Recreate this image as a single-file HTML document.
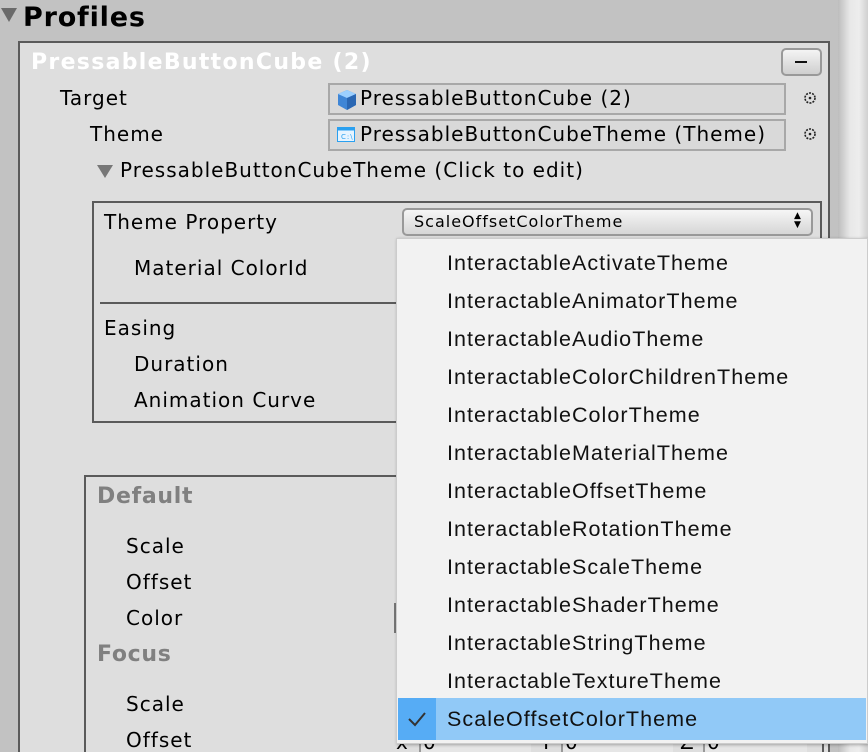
<!DOCTYPE html>
<html><head><style>
*{margin:0;padding:0;box-sizing:border-box}
html,body{width:868px;height:752px;overflow:hidden}
body{background:#c2c2c2;position:relative;font-family:"DejaVu Sans",sans-serif;font-size:20px;color:#000;letter-spacing:1px}
.a{position:absolute;white-space:nowrap}
.t{position:absolute;white-space:nowrap;line-height:24px}
.m{font-family:"Liberation Sans",sans-serif;font-size:21.5px;color:#111;position:absolute;left:447px;white-space:nowrap;line-height:24px;letter-spacing:1.05px}
</style></head><body>
<div class="a" style="left:838px;top:0;width:30px;height:752px;background:linear-gradient(90deg,#bdbdbd,#e8e8e8 40%,#ededed 70%,#d0d0d0)"></div>
<div class="a" style="left:1px;top:8px;width:0;height:0;border-left:8px solid transparent;border-right:8px solid transparent;border-top:14px solid #6a6a6a"></div>
<div class="t" style="left:23px;top:6px;font-weight:bold;font-size:27px;letter-spacing:0.8px">Profiles</div>
<div class="a" style="left:18px;top:41px;width:812px;height:711px;background:#dedede;border:2px solid #5a5a5a;border-bottom:none"></div>
<div class="t" style="left:31px;top:51px;font-weight:bold;color:#fff;font-size:22px;letter-spacing:1.3px">PressableButtonCube (2)</div>
<div class="a" style="left:781px;top:48px;width:41px;height:28px;border:2px solid #999;border-radius:5px;background:linear-gradient(#f4f4f4,#cfcfcf)"></div>
<div class="a" style="left:795px;top:61px;width:12px;height:2px;background:#111"></div>
<div class="t" style="left:60px;top:86px">Target</div>
<div class="t" style="left:90px;top:122px">Theme</div>
<div class="a" style="left:328px;top:83px;width:458px;height:32px;border:2px solid #a8a8a8;background:#d9d9d9"></div>
<div class="a" style="left:328px;top:119px;width:458px;height:32px;border:2px solid #a8a8a8;background:#d9d9d9"></div>
<svg class="a" style="left:336px;top:89px" width="22" height="22" viewBox="0 0 22 22"><path d="M11 1L20 5V16L11 21L2 16V5Z" fill="#3f86d6"/><path d="M11 1L20 5L11 9L2 5Z" fill="#9cd0ff"/><path d="M11 9L20 5V16L11 21Z" fill="#2a67b3"/></svg>
<svg class="a" style="left:337px;top:127px" width="18" height="16"><rect x="0.5" y="0.5" width="17" height="14" fill="#e6f4ff" stroke="#2aa0f0"/><rect x="0.5" y="0.5" width="17" height="3" fill="#2aa0f0"/><text x="4" y="12" font-size="7" fill="#2aa0f0" font-family="DejaVu Sans">C:\</text></svg>
<div class="t" style="left:360px;top:86px">PressableButtonCube (2)</div>
<div class="t" style="left:360px;top:122px">PressableButtonCubeTheme (Theme)</div>
<svg class="a" style="left:802px;top:90px" width="16" height="16"><circle cx="8" cy="8" r="5" fill="none" stroke="#222" stroke-width="1.6" stroke-dasharray="2 1.2"/><circle cx="8" cy="8" r="1.3" fill="#222"/></svg>
<svg class="a" style="left:802px;top:126px" width="16" height="16"><circle cx="8" cy="8" r="5" fill="none" stroke="#222" stroke-width="1.6" stroke-dasharray="2 1.2"/><circle cx="8" cy="8" r="1.3" fill="#222"/></svg>
<div class="a" style="left:97px;top:165px;width:0;height:0;border-left:8px solid transparent;border-right:8px solid transparent;border-top:13px solid #777"></div>
<div class="t" style="left:120px;top:158px">PressableButtonCubeTheme (Click to edit)</div>
<div class="a" style="left:92px;top:201px;width:730px;height:222px;border:2px solid #5a5a5a"></div>
<div class="t" style="left:104px;top:210px">Theme Property</div>
<div class="a" style="left:402px;top:208px;width:411px;height:28px;border:2px solid #999;border-radius:5px;background:linear-gradient(#f6f6f6,#d6d6d6)"></div>
<div class="t" style="left:414px;top:210px;font-size:16px">ScaleOffsetColorTheme</div>
<div class="t" style="left:794px;top:211px;font-size:9px;line-height:10px;letter-spacing:0">▲</div>
<div class="t" style="left:794px;top:220px;font-size:9px;line-height:10px;letter-spacing:0">▼</div>
<div class="t" style="left:134px;top:256px">Material ColorId</div>
<div class="a" style="left:100px;top:302px;width:300px;height:2px;background:#5a5a5a"></div>
<div class="t" style="left:104px;top:316px">Easing</div>
<div class="t" style="left:134px;top:352px">Duration</div>
<div class="t" style="left:134px;top:388px">Animation Curve</div>
<div class="a" style="left:84px;top:475px;width:740px;height:277px;border:2px solid #5a5a5a;border-bottom:none"></div>
<div class="t" style="left:97px;top:485px;font-weight:bold;color:#808080;font-size:22px;letter-spacing:0.7px">Default</div>
<div class="t" style="left:126px;top:534px">Scale</div>
<div class="t" style="left:126px;top:570px">Offset</div>
<div class="t" style="left:126px;top:606px">Color</div>
<div class="t" style="left:97px;top:643px;font-weight:bold;color:#808080;font-size:22px;letter-spacing:0.7px">Focus</div>
<div class="t" style="left:126px;top:692px">Scale</div>
<div class="t" style="left:126px;top:728px">Offset</div>
<div class="a" style="left:394px;top:603px;width:2px;height:30px;background:#777"></div>
<div class="t" style="left:396px;top:730px">x</div>
<div class="a" style="left:419px;top:735px;width:112px;height:20px;background:#e6e6e6;border-left:2px solid #999"></div>
<div class="t" style="left:423px;top:730px">0</div>
<div class="t" style="left:540px;top:730px">Y</div>
<div class="a" style="left:561px;top:735px;width:112px;height:20px;background:#e6e6e6;border-left:2px solid #999"></div>
<div class="t" style="left:565px;top:730px">0</div>
<div class="t" style="left:680px;top:730px">Z</div>
<div class="a" style="left:703px;top:735px;width:104px;height:20px;background:#e6e6e6;border-left:2px solid #999"></div>
<div class="t" style="left:707px;top:730px">0</div>
<div class="a" style="left:396px;top:238px;width:472px;height:506px;background:#f2f2f2;border:1px solid #ccc;box-shadow:1px 1px 3px rgba(0,0,0,.3)"></div>
<div class="a" style="left:398px;top:698px;width:468px;height:42px;background:#91c9f7"></div>
<div class="a" style="left:398px;top:698px;width:38px;height:42px;background:#56acf5"></div>
<svg class="a" style="left:406px;top:708px" width="22" height="22"><path d="M3 11L9 17L19 5" fill="none" stroke="#333" stroke-width="2"/></svg>
<div class="m" style="top:251px">InteractableActivateTheme</div>
<div class="m" style="top:289px">InteractableAnimatorTheme</div>
<div class="m" style="top:327px">InteractableAudioTheme</div>
<div class="m" style="top:365px">InteractableColorChildrenTheme</div>
<div class="m" style="top:403px">InteractableColorTheme</div>
<div class="m" style="top:441px">InteractableMaterialTheme</div>
<div class="m" style="top:479px">InteractableOffsetTheme</div>
<div class="m" style="top:517px">InteractableRotationTheme</div>
<div class="m" style="top:555px">InteractableScaleTheme</div>
<div class="m" style="top:593px">InteractableShaderTheme</div>
<div class="m" style="top:631px">InteractableStringTheme</div>
<div class="m" style="top:669px">InteractableTextureTheme</div>
<div class="m" style="top:707px">ScaleOffsetColorTheme</div>
</body></html>
